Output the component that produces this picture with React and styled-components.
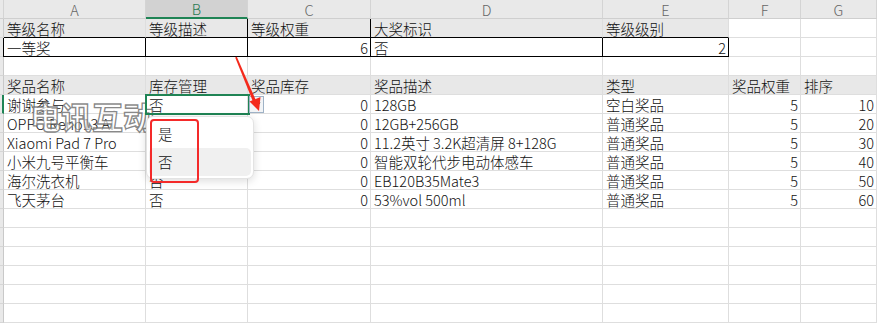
import React from 'react';
import styled, { createGlobalStyle } from 'styled-components';

const GlobalStyle = createGlobalStyle`
  html, body {
    margin: 0;
    padding: 0;
    background: #ffffff;
    overflow: hidden;
  }
  body {
    font-family: "Noto Sans CJK SC", "Liberation Sans", sans-serif;
    font-weight: 300;
  }
`;

const GREEN = '#1f8455';
const COLS = '4px 142px 102px 123px 232px 126px 72px 76px';

const Sheet = styled.div`
  position: relative;
  width: 877px;
  height: 323px;
  overflow: hidden;
`;

const Grid = styled.div`
  display: grid;
  grid-template-columns: ${COLS};
  grid-auto-rows: 19px;
`;

const ColHead = styled.div`
  box-sizing: border-box;
  display: flex;
  align-items: center;
  justify-content: center;
  background: ${(p) => (p.$active ? '#d2d2d2' : '#e9e9e9')};
  border-right: 1px solid #d4d4d4;
  border-bottom: ${(p) => (p.$active ? `2px solid ${GREEN}` : '1px solid #cfcfcf')};
  color: ${(p) => (p.$active ? '#2a7a53' : '#666')};
  font-size: 14.5px;
  line-height: 17px;
`;

const RowHead = styled.div`
  box-sizing: border-box;
  background: #e9e9e9;
  border-bottom: 1px solid #d6d6d6;
  border-right: ${(p) => (p.$active ? `2px solid ${GREEN}` : '1px solid #c9c9c9')};
`;

const Cell = styled.div`
  box-sizing: border-box;
  display: flex;
  align-items: center;
  justify-content: ${(p) => (p.$num ? 'flex-end' : 'flex-start')};
  padding: 0 2px 0 3px;
  background: ${(p) => (p.$shade ? '#e8e8e8' : '#ffffff')};
  border-right: 1px solid ${(p) => (p.$br ? '#000' : '#dedede')};
  border-bottom: 1px solid ${(p) => (p.$bb ? '#000' : '#dedede')};
  border-left: ${(p) => (p.$bl ? '1px solid #000' : 'none')};
  margin-left: ${(p) => (p.$bl ? '-1px' : '0')};
  color: #111;
  font-size: 14.5px;
  line-height: 17px;
  white-space: nowrap;
  overflow: visible;
`;

const Overlay = styled.svg`
  position: absolute;
  left: 0;
  top: 0;
  pointer-events: none;
`;

const Selection = styled.div`
  position: absolute;
  left: 145px;
  top: 94px;
  width: 105px;
  height: 21px;
  box-sizing: border-box;
  border: 2.5px solid ${GREEN};
`;

const DropButton = styled.div`
  position: absolute;
  left: 249px;
  top: 96px;
  width: 15px;
  height: 17px;
  box-sizing: border-box;
  border: 1px solid #9fb2c6;
  background: #f2f4f6;
  display: flex;
  align-items: center;
  justify-content: center;
`;

const Watermark = styled.div`
  position: absolute;
  left: 30px;
  top: 93px;
  font-size: 31px;
  font-weight: 700;
  color: rgba(255, 255, 255, 0.6);
  -webkit-text-stroke: 1.3px rgba(105, 105, 105, 0.8);
  white-space: nowrap;
  pointer-events: none;
`;

const Menu = styled.div`
  position: absolute;
  left: 146px;
  top: 116px;
  width: 108px;
  height: 63px;
  box-sizing: border-box;
  background: #fff;
  border: 1px solid #e3e3e3;
  border-radius: 7px;
  box-shadow: 0 2px 8px rgba(0, 0, 0, 0.14);
  padding: 2px;
  display: flex;
  flex-direction: column;
`;

const MenuItem = styled.div`
  flex: 1;
  display: flex;
  align-items: center;
  padding-left: 9px;
  border-radius: 5px;
  background: ${(p) => (p.$hover ? '#f0f0f0' : 'transparent')};
  font-size: 14.5px;
  color: #111;
`;

const Marker = styled.div`
  position: absolute;
  left: 150px;
  top: 119px;
  width: 49px;
  height: 64px;
  box-sizing: border-box;
  border: 2.5px solid #f42a2a;
  border-radius: 4px;
`;

const letters = ['A', 'B', 'C', 'D', 'E', 'F', 'G'];

const prizes = [
  ['谢谢参与', '否', 0, '128GB', '空白奖品', 5, 10],
  ['OPPO Reno13 AI', '否', 0, '12GB+256GB', '普通奖品', 5, 20],
  ['Xiaomi Pad 7 Pro', '否', 0, '11.2英寸 3.2K超清屏 8+128G', '普通奖品', 5, 30],
  ['小米九号平衡车', '否', 0, '智能双轮代步电动体感车', '普通奖品', 5, 40],
  ['海尔洗衣机', '否', 0, 'EB120B35Mate3', '普通奖品', 5, 50],
  ['飞天茅台', '否', 0, '53%vol 500ml', '普通奖品', 5, 60],
];

const prizeHeads = ['奖品名称', '库存管理', '奖品库存', '奖品描述', '类型', '奖品权重', '排序'];

export default function App() {
  const emptyRows = 6;

  return (
    <Sheet>
      <GlobalStyle />
      <Grid>
        {/* column letters */}
        <ColHead />
        {letters.map((l) => (
          <ColHead key={l} $active={l === 'B'}>{l}</ColHead>
        ))}

        {/* level table header */}
        <RowHead />
        <Cell $shade $bb>等级名称</Cell>
        <Cell $shade $bb $br>等级描述</Cell>
        <Cell $shade $bb $br>等级权重</Cell>
        <Cell $shade $bb>大奖标识</Cell>
        <Cell $shade $bb>等级级别</Cell>
        <Cell />
        <Cell />

        {/* level table values */}
        <RowHead />
        <Cell $bb $br $bl>一等奖</Cell>
        <Cell $bb $br></Cell>
        <Cell $bb $br $num>6</Cell>
        <Cell $bb $br>否</Cell>
        <Cell $bb $br $num>2</Cell>
        <Cell />
        <Cell />

        {/* spacer row */}
        <RowHead />
        {letters.map((l) => <Cell key={l} />)}

        {/* prize table header */}
        <RowHead />
        {prizeHeads.map((h) => <Cell key={h} $shade>{h}</Cell>)}

        {prizes.map((row, i) => (
          <React.Fragment key={row[0]}>
            <RowHead $active={i === 0} />
            <Cell>{row[0]}</Cell>
            <Cell>{row[1]}</Cell>
            <Cell $num>{row[2]}</Cell>
            <Cell>{row[3]}</Cell>
            <Cell>{row[4]}</Cell>
            <Cell $num>{row[5]}</Cell>
            <Cell $num>{row[6]}</Cell>
          </React.Fragment>
        ))}

        {Array.from({ length: emptyRows }).map((_, r) => (
          <React.Fragment key={r}>
            <RowHead />
            {letters.map((l) => <Cell key={l} />)}
          </React.Fragment>
        ))}
      </Grid>

      <Watermark>电讯互动</Watermark>

      <Selection />
      <DropButton>
        <svg width="9" height="6" viewBox="0 0 9 6">
          <path d="M0.5 0.5 L8.5 0.5 L4.5 5.5 Z" fill="#111" />
        </svg>
      </DropButton>

      <Menu>
        <MenuItem>是</MenuItem>
        <MenuItem $hover>否</MenuItem>
      </Menu>
      <Marker />

      {/* red pointer arrow */}
      <Overlay width="877" height="323" viewBox="0 0 877 323">
        <polygon points="235.2,57.4 236.8,56.8 256.2,101 253.2,102.2" fill="#f42a1c" />
        <polygon points="259,111 260.5,97 249.5,101.5" fill="#f42a1c" />
      </Overlay>
    </Sheet>
  );
}
